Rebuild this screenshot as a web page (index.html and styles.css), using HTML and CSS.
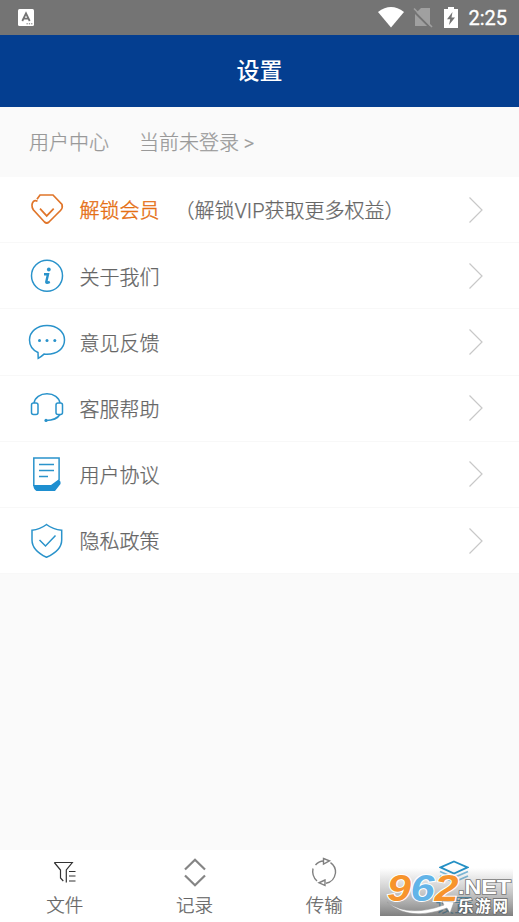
FILE: index.html
```
<!DOCTYPE html>
<html lang="zh-CN">
<head>
<meta charset="utf-8">
<title>设置</title>
<link rel="stylesheet" href="styles.css">
</head>
<body>
<div class="app">
  <div class="status">
    <svg class="ime" width="16" height="17" viewBox="0 0 16 17"><rect width="16" height="17" rx="1.5" fill="#fff"/><path d="M4.300 12 8 4.300 11.700 12M5.800 9.700h4.400" fill="none" stroke="#747474" stroke-width="1.800"/><path d="M8.500 14.800h6" stroke="#747474" stroke-width="1" stroke-dasharray="1.300 1"/></svg>
    <div class="status-right">
      <svg width="26" height="21" viewBox="0 0 26 21"><path d="M0 5Q13-5 26 5L13 20.500Z" fill="#fff"/></svg>
      <svg width="20" height="21" viewBox="0 0 20 21"><path d="M8 1h9v18H2V7Z" fill="#a0a0a0"/><path d="M0 3.500 17 20.500" stroke="#747474" stroke-width="2"/><path d="M1 1.500 19 20" stroke="#a0a0a0" stroke-width="1.600"/></svg>
      <svg width="14" height="21" viewBox="0 0 14 21"><path d="M4 0h6v2h4v19H0V2h4Z" fill="#fff"/><path d="M8.500 5 3 12.200h3.200L5 18l6-7.500H7.500Z" fill="#747474"/></svg>
      <span class="clock">2:25</span>
    </div>
  </div>
  <header class="header">设置</header>
  <div class="user"><span>用户中心</span><span>当前未登录 &gt;</span></div>
  <main class="list">
    <div class="row vip">
      <svg class="icon" viewBox="0 0 40 40"><path d="M10 9.300 13 5h13l9 9.500Q36 18 33.500 20.500L22 32Q19.700 34 17.500 32L6.300 19.800Q3.500 15 6.500 11.300Q8 10 10.500 11.200M13 18.700l6.700 7.200 7-7.200"/></svg>
      <span class="label">解锁会员</span><span class="note">（解锁VIP获取更多权益）</span>
      <svg class="arrow" viewBox="0 0 14 26"><path d="M.5.5 13 13 .5 25.500"/></svg>
    </div>
    <div class="row">
      <svg class="icon" viewBox="0 0 40 40"><circle cx="20" cy="19.800" r="15.500"/><circle class="fill" cx="21.800" cy="13.500" r="1.900"/><path class="thick" d="M17 18.200h4l-1.700 7.500q-.3 2 3.500.2"/></svg>
      <span class="label">关于我们</span>
      <svg class="arrow" viewBox="0 0 14 26"><path d="M.5.5 13 13 .5 25.500"/></svg>
    </div>
    <div class="row">
      <svg class="icon" viewBox="0 0 40 40"><path d="M11 30.500C5.500 28 2.500 23.500 2.500 18 2.500 9.500 10 3.500 20 3.500S37.500 9.500 37.500 18 30 32.300 20 32.300q-1.500 0-3-.2Q14.500 34.500 11.200 36.300Z"/><g class="fill"><circle cx="12.500" cy="18.500" r="1.500"/><circle cx="20" cy="18.500" r="1.500"/><circle cx="27.800" cy="18.500" r="1.500"/></g></svg>
      <span class="label">意见反馈</span>
      <svg class="arrow" viewBox="0 0 14 26"><path d="M.5.5 13 13 .5 25.500"/></svg>
    </div>
    <div class="row">
      <svg class="icon" viewBox="0 0 40 40"><rect x="4.500" y="15" width="6.500" height="11.500" rx="2"/><rect x="29" y="15" width="6.500" height="11.500" rx="2"/><path d="M7 15C8 9.500 13 5.800 20 5.800s12 3.700 13 9.200M33 26.500q-3.500 5.800-14 5.900"/><circle class="fill" cx="19" cy="32.400" r="1.600"/></svg>
      <span class="label">客服帮助</span>
      <svg class="arrow" viewBox="0 0 14 26"><path d="M.5.5 13 13 .5 25.500"/></svg>
    </div>
    <div class="row">
      <svg class="icon" viewBox="0 0 40 40"><path d="M6.800 32V4h25.300v22"/><path class="solid" d="M6.200 31H24L31.500 25.500q2.500 1 2 4.500L28 37H9.500Q6.500 35.500 6.200 31Z"/><path d="M12 10.500h15M12 16.500h15M12 22.500h9"/></svg>
      <span class="label">用户协议</span>
      <svg class="arrow" viewBox="0 0 14 26"><path d="M.5.5 13 13 .5 25.500"/></svg>
    </div>
    <div class="row">
      <svg class="icon" viewBox="0 0 40 40"><path d="M19.500 3.500Q26 8.500 34.700 9.300V19q0 10.500-15.200 17.300Q5 29.500 5 19V9.300Q13 8.500 19.500 3.500ZM12.500 19l6 6 10-10.500"/></svg>
      <span class="label">隐私政策</span>
      <svg class="arrow" viewBox="0 0 14 26"><path d="M.5.5 13 13 .5 25.500"/></svg>
    </div>
  </main>
  <nav class="tabs">
    <div class="tab">
      <svg viewBox="0 0 30 30"><path stroke="#333" stroke-width="1.200" d="M4.300 5.500h18l-6 7.500v12.500M4.300 5.500l6.200 7.500v8l2.800 3M19 14.500h6.500M19 19h6.500M19 24h6.500"/></svg>
      <span>文件</span>
    </div>
    <div class="tab">
      <svg viewBox="0 0 30 30"><path stroke="#858585" stroke-width="2.200" d="M5 12.500 15 2.700l10 9.800M5 18.500l10 9.800 10-9.800"/></svg>
      <span>记录</span>
    </div>
    <div class="tab">
      <svg viewBox="0 0 30 30"><g stroke="#808080" stroke-width="1.400"><path d="M6.500 8Q9.500 4.200 14.800 4M21.500 5.700Q27 9.500 26.500 16 25 25 17 26.200M4 11.500Q2.500 19 8 24"/><path d="m14.500 1.500 6 2.300-6 3.200ZM16 23l-6 2.800 6 2.600Z"/></g></svg>
      <span>传输</span>
    </div>
    <div class="tab active">
      <svg viewBox="0 0 30 30"><g stroke="#2490c5" stroke-width="1.900"><path d="M15 4.500 28.500 10.300 15 16.500 1.500 10.300Z"/><path d="m1 14.500 14 6 14-6M1 19l14 6 14-6" opacity=".6"/></g></svg>
      <span>设置</span>
    </div>
    <div class="mark">
      <svg width="133" height="48" viewBox="0 0 133 48">
        <defs><linearGradient id="shade" x1="0" y1="0" x2="0" y2="1"><stop offset="0" stop-color="#777" stop-opacity="0"/><stop offset=".5" stop-color="#777" stop-opacity=".4"/><stop offset="1" stop-color="#555" stop-opacity=".75"/></linearGradient></defs>
        <rect width="133" height="48" fill="url(#shade)"/>
        <g class="outline"><text x="7" y="32.500" textLength="24" lengthAdjust="spacingAndGlyphs">9</text><text x="30.500" y="32.500" textLength="24" lengthAdjust="spacingAndGlyphs" class="blue">6</text><text x="54.500" y="32.500" textLength="24" lengthAdjust="spacingAndGlyphs">2</text></g>
        <text class="net" x="78" y="26" textLength="53" lengthAdjust="spacingAndGlyphs">.NET</text>
        <path d="M7 34Q28 50 64 37L62 33 74 34 70 45 67 40Q29 54 7 34Z" fill="#fff" stroke="#999" stroke-width=".5"/>
        <text class="site" x="78" y="43.500" textLength="50">乐游网</text>
      </svg>
    </div>
  </nav>
</div>
</body>
</html>
```
FILE: styles.css
```
* { box-sizing: border-box; }
body { margin: 0; font-family: Roboto, "Noto Sans CJK SC", sans-serif; }
.app { width: 519px; height: 922px; display: flex; flex-direction: column; background: #fafafa; overflow: hidden; }
svg { display: block; flex: none; fill: none; }
.status { height: 34.500px; flex: none; background: #747474; display: flex; justify-content: space-between; align-items: center; padding: 0 12px 0 18px; }
.status-right { display: flex; align-items: center; color: #fff; }
.status-right svg + svg { margin-left: 9px; }
.status-right svg:nth-child(3) { margin-left: 11px; }
.clock { font-size: 20px; font-weight: 400; -webkit-text-stroke: .3px; line-height: 34px; margin-left: 10px; padding-top: 1px; }
.header { height: 72px; flex: none; background: #043e90; color: #fff; font-size: 23px; font-weight: 500; line-height: 73px; text-align: center; }
.user { height: 70.500px; flex: none; padding: 0 0 0 29px; display: flex; align-items: center; gap: 30px; color: #999; font-size: 20px; font-weight: 300; -webkit-text-stroke: .25px; }
.list { flex: none; }
.row { height: 66.200px; display: flex; align-items: center; background: #fff; border-bottom: 1.200px solid #f8f8f8; padding: 0 36px 0 27px; font-size: 20px; font-weight: 300; color: #666; -webkit-text-stroke: .25px; }
.label { padding-top: .5px; }
.icon { width: 40px; height: 40px; stroke: #2a93cb; stroke-width: 1.500; margin-right: 12.500px; }
.icon .fill { fill: #2a93cb; stroke: none; }
.icon .solid { fill: #1e8fd0; stroke: none; }
.icon .thick { stroke-width: 2.400; }
.vip .icon { stroke: #e0752a; stroke-width: 1.700; }
.vip .label { color: #e56f14; -webkit-text-stroke: .4px; }
.note { margin-left: 15px; }
.arrow { width: 14px; height: 26px; margin-left: auto; stroke: #c8c8c8; stroke-width: 1.200; }
.tabs { position: relative; height: 72px; flex: none; margin-top: auto; background: #fff; display: grid; grid-template-columns: repeat(4, 1fr); }
.tab { display: flex; flex-direction: column; align-items: center; padding-top: 7px; font-size: 18.500px; font-weight: 300; line-height: 26px; color: #666; -webkit-text-stroke: .25px; }
.tab svg { width: 30px; height: 30px; margin-bottom: 6px; }
.tab.active { color: #2490c5; }
.mark { position: absolute; left: 380px; top: 18px; -webkit-text-stroke: 0; }
.outline { font: italic 700 37px "Liberation Sans", sans-serif; fill: #f7942c; stroke: #fff; stroke-width: 2px; paint-order: stroke; }
.blue { fill: #62b4e8; }
.net { font: 700 20px "Liberation Sans", sans-serif; fill: #fff; stroke: #777; stroke-width: 1.500px; paint-order: stroke; }
.site { font: 700 15.500px "Noto Sans CJK SC", sans-serif; fill: #fff; stroke: #666; stroke-width: 1.500px; paint-order: stroke; }
```
